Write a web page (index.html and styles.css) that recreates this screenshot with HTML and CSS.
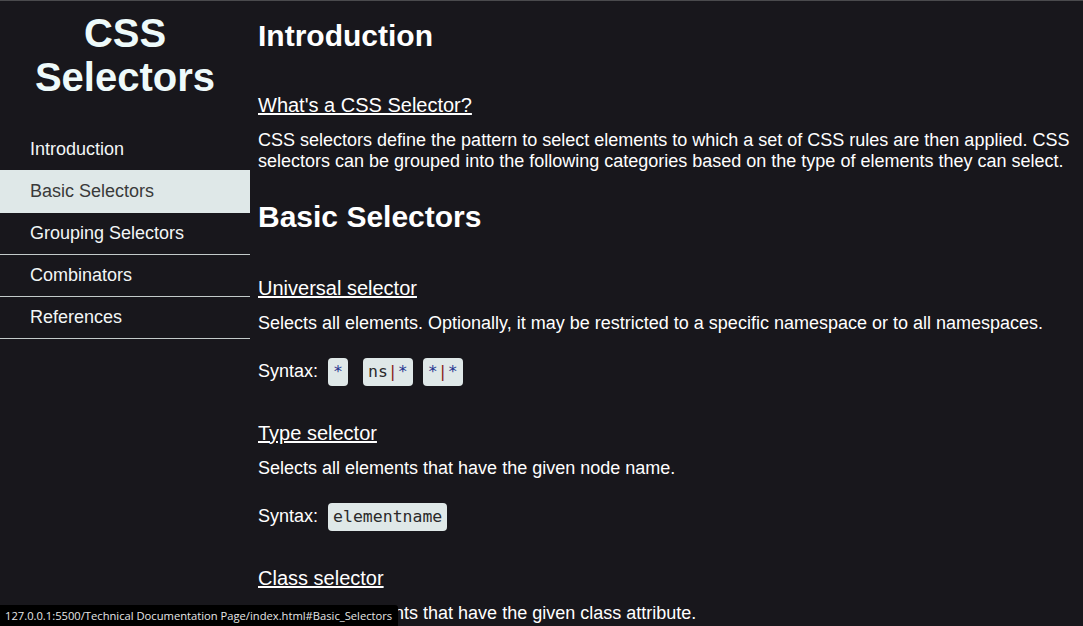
FILE: index.html
```html
<!DOCTYPE html>
<html lang="en">
<head>
<meta charset="utf-8">
<title>CSS Selectors</title>
<link rel="stylesheet" href="styles.css">
</head>
<body>
<div class="page">
  <nav class="sidebar" id="navbar">
    <header class="site-title">CSS Selectors</header>
    <ul class="nav-list">
      <li><a class="nav-link" href="#Introduction">Introduction</a></li>
      <li><a class="nav-link active" href="#Basic_Selectors">Basic Selectors</a></li>
      <li><a class="nav-link" href="#Grouping_Selectors">Grouping Selectors</a></li>
      <li><a class="nav-link" href="#Combinators">Combinators</a></li>
      <li><a class="nav-link" href="#References">References</a></li>
    </ul>
  </nav>
  <main class="content" id="main-doc">
    <section class="main-section" id="Introduction">
      <h1 class="section-title">Introduction</h1>
      <h3 class="sub-title"><a href="#">What's a CSS Selector?</a></h3>
      <p class="text">CSS selectors define the pattern to select elements to which a set of CSS rules are then applied. CSS selectors can be grouped into the following categories based on the type of elements they can select.</p>
    </section>
    <section class="main-section" id="Basic_Selectors">
      <h1 class="section-title section-title-wide">Basic Selectors</h1>
      <h3 class="sub-title"><a href="#">Universal selector</a></h3>
      <p class="text">Selects all elements. Optionally, it may be restricted to a specific namespace or to all namespaces.</p>
      <p class="text syntax">Syntax: <code class="code code-first"><span class="tok-op">*</span></code> <code class="code">ns<span class="tok-pipe">|</span><span class="tok-op">*</span></code> <code class="code"><span class="tok-op">*</span><span class="tok-pipe">|</span><span class="tok-op">*</span></code></p>
      <h3 class="sub-title"><a href="#">Type selector</a></h3>
      <p class="text">Selects all elements that have the given node name.</p>
      <p class="text syntax">Syntax: <code class="code">elementname</code></p>
      <h3 class="sub-title"><a href="#">Class selector</a></h3>
      <p class="text">Selects all elements that have the given class attribute.</p>
      <p class="text syntax">Syntax: <code class="code">.classname</code></p>
    </section>
  </main>
</div>
<div class="status-bar">127.0.0.1:5500/Technical Documentation Page/index.html#Basic_Selectors</div>
</body>
</html>
```

FILE: styles.css
```css
html, body {
  margin: 0;
  padding: 0;
  height: 100%;
  overflow: hidden;
}

body {
  background: #18171c;
  color: #ffffff;
  font-family: "Liberation Sans", Arial, sans-serif;
  border-top: 1px solid #4a4a4d;
  box-sizing: border-box;
}

.page {
  display: flex;
  height: 100%;
}

.sidebar {
  flex: 0 0 250px;
  width: 250px;
  display: flex;
  flex-direction: column;
}

.site-title {
  margin: 10px 0 30px;
  font-size: 40px;
  line-height: 44px;
  font-weight: bold;
  text-align: center;
  color: #eefafa;
}

.nav-list {
  list-style: none;
  margin: 0;
  padding: 0;
}

.nav-link {
  display: block;
  height: 41px;
  line-height: 41px;
  padding-left: 30px;
  font-size: 18px;
  color: #f2f6f6;
  text-decoration: none;
  border-bottom: 1px solid #c3caca;
}

.nav-list li:first-child .nav-link {
  border-bottom-color: #18171c;
}

.nav-link.active {
  margin-top: -1px;
  height: 42px;
  line-height: 42px;
  background: #dfe8e8;
  color: #3a3a3a;
  border-bottom-color: #dfe8e8;
}

.content {
  flex: 1;
  padding: 17px 8px 0 8px;
  overflow-y: auto;
  scrollbar-width: none;
}

.content::-webkit-scrollbar {
  display: none;
}

.section-title {
  margin: 0 0 39px;
  font-size: 30px;
  line-height: 36px;
  font-weight: bold;
  color: #ffffff;
}

.section-title-wide {
  margin-bottom: 41px;
}

.sub-title {
  margin: 0 0 13px;
  font-size: 20px;
  line-height: 24px;
  font-weight: normal;
}

.sub-title a {
  color: #ffffff;
  text-decoration: underline;
}

.text {
  margin: 0 0 27px;
  font-size: 18px;
  line-height: 21px;
}

.syntax {
  margin-bottom: 39px;
}

.code {
  display: inline;
  margin-left: 5px;
  padding: 4px 5px 5px;
  border-radius: 4px;
  background: #dfe8e8;
  color: #2a2a2a;
  font-family: "DejaVu Sans Mono", "Liberation Mono", monospace;
  font-size: 16.5px;
}

.code-first {
  margin-right: 5px;
}

.tok-op {
  color: #27358f;
}

.tok-pipe {
  color: #8a1f1f;
}

.status-bar {
  position: fixed;
  left: 0;
  bottom: 0;
  padding: 4px 6px 3px 5px;
  background: #000000;
  color: #e6e6e6;
  font-family: "Open Sans", "Noto Sans", sans-serif;
  font-size: 11.2px;
  line-height: 14px;
  border-top-right-radius: 3px;
}
```
